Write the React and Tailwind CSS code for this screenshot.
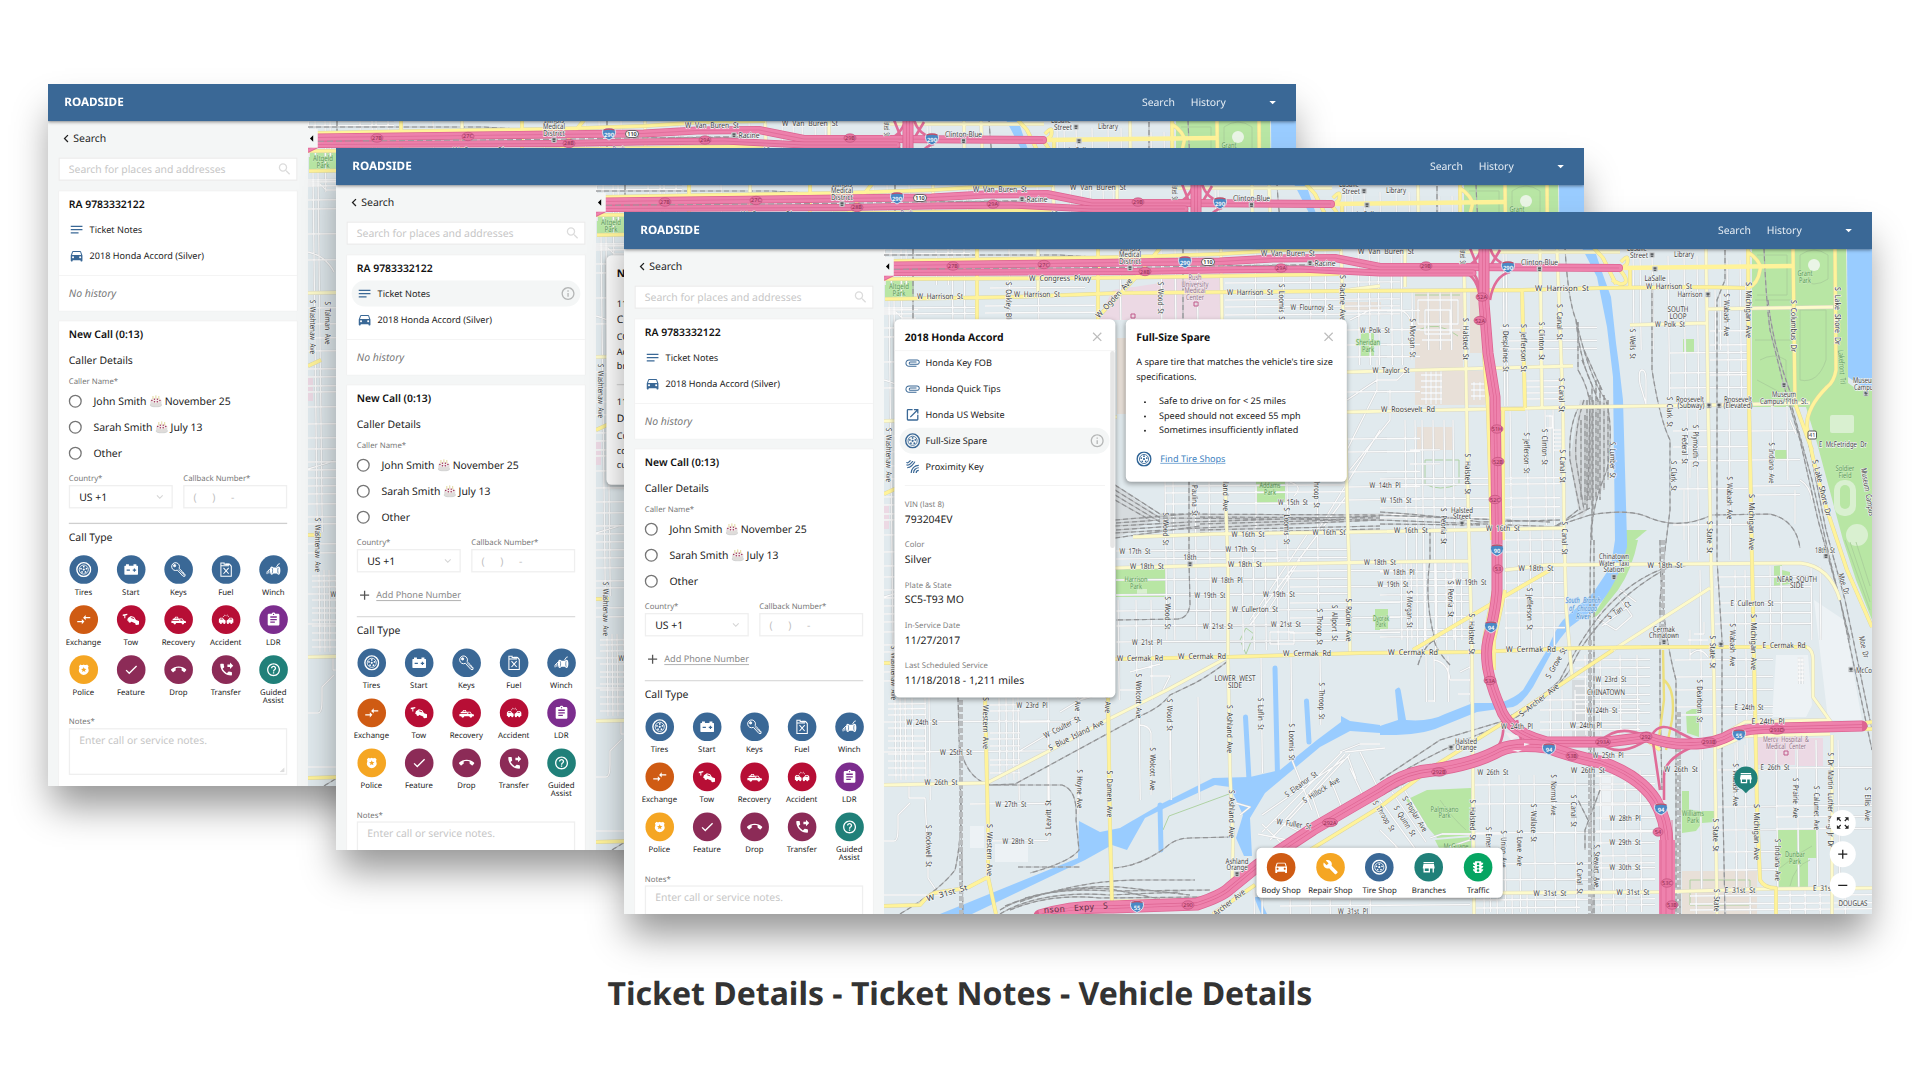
import React from "react";
import {
  MdNotes, MdDirectionsCar, MdSearch, MdAttachFile, MdOpenInNew, MdBuild, MdStore, MdTraffic, MdAssignment,
  MdCheck, MdCallEnd, MdPhoneForwarded, MdHelpOutline, MdInfoOutline, MdClose, MdAdd, MdRemove, MdZoomOutMap,
  MdArrowDropDown, MdArrowLeft, MdExpandMore, MdChevronLeft, MdCompareArrows,
} from "react-icons/md";

/* ---------- icons ---------- */

const TireIcon = ({ className }) => (
  <svg viewBox="0 0 24 24" className={className} fill="none" stroke="currentColor">
    <circle cx="12" cy="12" r="10.6" strokeWidth="2.2" />
    <circle cx="12" cy="12" r="7" strokeWidth="1.3" />
    <g fill="currentColor" stroke="none">
      <circle cx="12" cy="12" r="1.7" />
      <circle cx="12" cy="7.6" r="1.35" />
      <circle cx="16.2" cy="10.6" r="1.35" />
      <circle cx="14.6" cy="15.6" r="1.35" />
      <circle cx="9.4" cy="15.6" r="1.35" />
      <circle cx="7.8" cy="10.6" r="1.35" />
    </g>
  </svg>
);
const BatteryIcon = ({ className }) => (
  <svg viewBox="0 0 24 24" className={className} fill="currentColor">
    <path fillRule="evenodd" d="M4 4h4.5v2h7V4H20v2h1.5a1 1 0 0 1 1 1v12a1 1 0 0 1-1 1h-19a1 1 0 0 1-1-1V7a1 1 0 0 1 1-1H4zM5 12v1.8h5V12zm11.1-1.6V12h-1.7v1.8h1.7v1.7h1.8v-1.7h1.7V12h-1.7v-1.6z" />
  </svg>
);
const KeyIcon = ({ className }) => (
  <svg viewBox="0 0 24 24" className={className} fill="none" stroke="currentColor" strokeWidth="1.5" strokeLinejoin="round">
    <path d="M12.6 10.2a6 6 0 1 0-2.6 2.6l8.6 9.4h3.2v-3l-2-.4-.3-2.2-2-.3-.4-2z" />
    <circle cx="5.8" cy="6" r="1.7" fill="currentColor" />
    <path d="M12 12l8 8.3" strokeWidth="1" />
  </svg>
);
const FuelIcon = ({ className }) => (
  <svg viewBox="0 0 24 24" className={className} fill="none" stroke="currentColor" strokeWidth="1.6">
    <path d="M4 6V1.8h5V4h8.5L20 7v15.2H4z" />
    <path d="M4 6h12.5M8 9.5l8 9M16 9.5l-8 9" />
    <path d="M11 4h6" strokeWidth="2.4" />
  </svg>
);
const WinchIcon = ({ className }) => (
  <svg viewBox="0 0 24 24" className={className} fill="currentColor">
    <path d="M9.5 7.5c1.3 0 1.7 1.5 2.8 1.5h4.4c1.1 0 1.500-1.500 2.800-1.500 2.200 0 3 2.500 3 6s-.8 6.500-3 6.500c-1.300 0-1.700-1.800-2.800-1.800h-4.400c-1.100 0-1.500 1.800-2.800 1.800-2.200 0-3-3-3-6.500s.8-6 3-6z" />
    <path d="M7 10.500L2 15.500v3.500M4.800 13v5M16.500 8l3-4.500 2-.5" stroke="currentColor" strokeWidth="1.500" fill="none" />
    <path d="M9.800 9.500c1 2 1 6 0 8.500M19.200 9.500c-1 2-1 6 0 8.500" stroke="#3a6896" strokeWidth="1.100" fill="none" />
  </svg>
);
const TowIcon = ({ className }) => (
  <svg viewBox="0 0 28 24" className={className} fill="currentColor">
    <path d="M1 4l7-1v2l-3 .7V10H3.400V6L1 6.400z" />
    <path d="M9 9.500l4.500-3 5 1.600 3 4.400 4.500 1.500v6l-4.300-1.500-9-4-5-1z" />
    <circle cx="12" cy="14.500" r="2.200" />
    <circle cx="22.500" cy="18.300" r="2.200" />
    <path d="M13 9.200l1.500-1 3 1 1.400 2.200z" fill="#b70e35" />
  </svg>
);
const RecoveryIcon = ({ className }) => (
  <svg viewBox="0 0 28 24" className={className} fill="currentColor">
    <path d="M1 14h14v-4h5.500l3 4 3.500.8V18H1z" />
    <path d="M3 12.800l.5-2.300 2.500-.5 2-3h4.500l2.500 5.800z" />
    <circle cx="7" cy="18.300" r="2.300" />
    <circle cx="21.500" cy="18.300" r="2.300" />
    <path d="M17 11.300h2.800l1.800 2.600H17zM7.800 10l1.200-1.700h2.500l.8 1.700z" fill="#b70e35" />
  </svg>
);
const AccidentIcon = ({ className }) => (
  <svg viewBox="0 0 30 24" className={className} fill="currentColor">
    <path d="M1 18v-6l2.500-3.500h5L11 12l3 1.500V18zM29 18v-6l-2.500-3.500h-5L19 12l-3 1.500V18z" />
    <circle cx="5" cy="18.600" r="2.100" />
    <circle cx="11.500" cy="18.600" r="2.100" />
    <circle cx="18.500" cy="18.600" r="2.100" />
    <circle cx="25" cy="18.600" r="2.100" />
    <path d="M9 6.500l2.500-1 1-2.500L15 5l2.500-2 1 2.500 2.500 1" stroke="currentColor" strokeWidth="1.300" fill="none" strokeDasharray="2.500 1" />
    <path d="M3.500 12l1-2h3.200l1.300 2zM26.500 12l-1-2h-3.200L21 12z" fill="#b70e35" />
  </svg>
);
const PoliceIcon = ({ className }) => (
  <svg viewBox="0 0 24 24" className={className} fill="currentColor">
    <path fillRule="evenodd" d="M6 2.500a5 5 0 0 0 6 0 5 5 0 0 0 6 0l3 3c-1.800 2.200-.6 4.300 0 6.500 1 5.500-4.500 8.500-9 10-4.500-1.500-10-4.500-9-10 .6-2.200 1.800-4.300 0-6.500zM12 7l-1.400 3.400-3.600.3 2.800 2.300-.9 3.500L12 14.600l3.100 1.900-.9-3.500 2.800-2.300-3.600-.3z" />
  </svg>
);
const ProximityIcon = ({ className }) => (
  <svg viewBox="0 0 24 24" className={className} fill="none" stroke="currentColor" strokeWidth="1.800">
    <path d="M2.500 5Q4 7 6.500 4.500T9 2.500M2.500 9Q5.500 10.500 9 7T12.500 3M3.500 13.500Q8 13.500 11.500 9.500T15.500 4" />
    <path d="M21.500 17.500c-2.200 0-4 1.800-4 4M21.500 13.500c-4.500 0-8 3.500-8 8M21.500 9.800c-6.600 0-11.700 5.100-11.700 11.700" />
  </svg>
);
const Cake = () => (
  <svg viewBox="0 0 20 20" className="mx-1 h-5 w-5 shrink-0">
    <ellipse cx="10" cy="16" rx="9.500" ry="3.500" fill="#d2d3d3" />
    <path d="M1.500 9v6c0 4 17 4 17 0V9z" fill="#dfdcda" />
    <ellipse cx="10" cy="8.800" rx="8.500" ry="4.200" fill="#f3eceb" />
    <path d="M5.500 7V2M10 6V1M14.500 7V2" stroke="#ddd08c" strokeWidth="1.300" />
    <g fill="#9c2f58">
      <circle cx="3.800" cy="8.800" r="1.200" />
      <circle cx="7.800" cy="10.800" r="1.200" />
      <circle cx="12.200" cy="10.800" r="1.200" />
      <circle cx="16.200" cy="8.800" r="1.200" />
      <circle cx="7.800" cy="7" r="1" />
      <circle cx="12.300" cy="7" r="1" />
    </g>
  </svg>
);

/* ---------- map ---------- */

const vLines = (xs, y0, y1) => xs.map((x) => `M${x} ${y0}L${x + (y1 - y0) * 0.012} ${y1}`).join("");
const hLines = (ys, x0, x1) => ys.map((y) => `M${x0} ${y}L${x1} ${y - (x1 - x0) * 0.007}`).join("");

const minor = [
  vLines([884.5, 891, 906, 936, 948], 249, 285), vLines([901, 952, 964, 1009, 1038], 249, 320),
  hLines([249, 254], 884, 970), hLines([308, 314], 884, 977), hLines([306, 313], 985, 1095), hLines([288], 990, 1085),
  vLines([1120, 1161, 1175, 1197, 1255, 1283, 1310, 1325], 249, 320), hLines([283, 300, 307, 315], 1225, 1400),
  vLines([889, 894], 300, 660), hLines([310, 328, 337, 362, 388, 436, 452, 466, 479, 497, 505, 514, 520, 535, 552, 566, 577, 590, 598, 606, 614, 622, 632, 645, 652, 672, 681], 884, 918),
  "M884 312h12l6 6h14M884 380q18 4 26 20M884 597q14-4 26-8",
  vLines([1165, 1173, 1195, 1209, 1287, 1317], 480, 640), vLines([1118, 1136, 1151], 600, 700), vLines([1242, 1253, 1265, 1277], 540, 650),
  hLines([486, 493, 504], 1165, 1347), hLines([551, 559, 580, 595, 611, 626, 642], 1116, 1350), hLines([571, 587, 603, 618, 633], 1290, 1400),
  "M1347 495L1250 625M1310 530l-60 90M1380 430L1318 530M1300 560l-35 55M1256 485v50M1290 482q14 4 4 14M1270 632h24v12h-24z",
  vLines([1358, 1369, 1378, 1391, 1401], 249, 365), hLines([270, 311, 330, 345, 357, 392, 439, 452, 472, 487, 500, 515], 1347, 1420),
  "M1350 320l20-10h30q12 4 12 20v30M1347 400l30-20h20l8-8M1350 470l40-50v-30M1347 450l30-60v-30",
  vLines([1405, 1415, 1422, 1433, 1444, 1453], 420, 650), hLines([479, 485, 499, 508, 518], 1380, 1560), hLines([450, 464], 1410, 1440),
  "M1426 370v34M1431 370v34M1436 370v34M1441 370v34M1421 375h21M1421 381h21M1421 387h21M1421 393h21M1421 399h21M1471 384h14M1471 390h14M1471 396h14M1474 382v18M1480 382v18",
  vLines([1412, 1428, 1440, 1451], 290, 350), "M1418 300h40v24h-40zM1420 330h40M1422 340h30M1425 310h25v24h-25z",
  vLines([1503, 1506], 250, 406), vLines([1510, 1527, 1545, 1553], 408, 525), hLines([328, 341, 349], 1500, 1597), hLines([381, 387, 393, 399], 1525, 1563),
  "M1550 415v38M1553 430h10M1553 434h10M1553 438h10M1553 442h10M1553 446h10M1553 450h10M1546 416h6v12h-6",
  vLines([1633, 1652, 1640], 255, 350), vLines([1668, 1684, 1697], 256, 400), vLines([1727, 1740], 260, 403), vLines([1715, 1720], 290, 350),
  hLines([353, 373, 388], 1670, 1748), hLines([331, 345, 360, 375, 287], 1710, 1748), "M1642 370q4 0 4 10v26M1642 370q-4 0-2 14l6 20",
  vLines([1687, 1697, 1729], 406, 560), vLines([1772, 1787], 406, 480), hLines([431, 447, 461, 489, 525], 1673, 1748), hLines([431, 460, 486, 495], 1750, 1800),
  "M1690 462v16M1684 490v50M1800 480q10 6 12 20M1790 420l6 14M1795 490v34",
  vLines([1401, 1411, 1425, 1436, 1453, 1461], 560, 640), hLines([562, 572, 580, 586, 595, 602, 617, 630, 637], 1380, 1470),
  vLines([1505, 1518, 1530, 1542, 1553], 528, 650), hLines([540, 552, 583, 598, 613, 628], 1505, 1565),
  vLines([1426, 1434, 1448, 1470], 656, 702), "M1428 701h6M1450 680h22M1458 694h14M1434 660q14 2 16 20M1460 672l12-6",
  vLines([1585, 1600, 1620, 1637], 655, 735), hLines([660, 668, 677, 686, 695, 704, 713, 725, 755], 1575, 1650), vLines([1550, 1562, 1575], 690, 740), hLines([700, 710, 722, 730], 1540, 1640),
  "M1596 618l22-22 14 20-16 14z M1602 626l24-18M1620 590l16 12",
  vLines([1735, 1700, 1745], 570, 760), vLines([1770, 1781, 1811, 1820], 566, 640), hLines([577, 587, 603, 613, 624], 1715, 1811), hLines([660, 677, 690, 707, 715], 1675, 1773),
  "M1690 655q10-10 18 2M1690 630v30M1704 622v12h-10M1688 640h20",
  vLines([1799, 1802], 657, 684), "M1797 660h8M1797 664h8M1797 668h8M1797 672h8M1797 676h8M1797 680h8",
  vLines([1700, 1735, 1745], 745, 890), vLines([1776, 1797, 1816, 1838], 740, 888), hLines([770, 807, 830, 852, 870], 1718, 1776), hLines([768, 806, 817, 829], 1776, 1872),
  vLines([1489, 1504, 1519, 1534, 1554, 1575, 1590], 775, 912), hLines([785, 804, 833, 864, 880, 900], 1475, 1655),
  vLines([1600, 1612, 1625, 1640], 770, 912), hLines([776, 790, 805, 818, 831, 843, 856, 868, 880, 905], 1596, 1655),
  vLines([1484, 1497, 1512, 1527], 892, 914), hLines([900, 908], 1475, 1580), hLines([896, 904, 910], 1690, 1872), vLines([1696, 1725, 1750, 1790, 1805, 1820, 1845], 890, 914),
  "M1380 800l36 50M1392 792l34 50M1402 786l24 40M1380 830l30 30M1395 846l40 46M1410 860l60-20M1430 838l12-4h60",
  vLines([929, 1048, 1078, 1139, 1170, 1198, 1018], 697, 800), vLines([895, 900, 905, 912, 925], 698, 780),
  hLines([704, 709, 715, 722, 728, 736, 741, 748, 754, 761, 768, 775], 888, 926), hLines([722, 752], 884, 1050), hLines([705, 711, 733, 739, 746, 760, 765, 773], 990, 1020),
  vLines([999, 1006, 1013], 698, 780), hLines([804], 970, 1050), hLines([841], 988, 1048), hLines([722], 1020, 1078),
  "M909 786v12h16l3 60v20l8 12M884 841h10q4 0 4-12v-14l12-12M884 895h60M1048 740v100M1078 780v34M1018 752l60-36M1078 800v12M1139 725q10 0 12 8v62M1170 720v40",
  "M1060 712l50-30M1070 690l30-4M1120 690h20M1130 672l30-8M1150 676h20l-8 16M1080 700l26-8",
  vLines([1261], 657, 773), vLines([1291], 657, 760), vLines([1320], 655, 725),
  "M1262 832l80-80M1270 840l80-86M1285 820l60-66M1345 752l40-4M1262 815l26-18 60-40 8 22M1310 790l10 30M1330 778l12 30M1350 768l14 30M1360 752l20 40M1292 760l20 50M1262 824l20 20M1258 834l30 6",
  "M1240 815l10-8-14-4M1275 820l30 14M1340 752l20-8h20",
  vLines([1254, 1262, 1290, 1310, 1330, 1350, 1370], 890, 914), hLines([899, 906], 1280, 1470), hLines([893], 1280, 1475),
].join("");

const paleYellow = [
  "M884 421L1117 417M1347 412L1490 409L1580 407L1713 405L1810 403",
  "M1347 372L1573 366M1133 537L1213 534L1360 532L1563 528M1113 568L1227 565L1380 562L1470 561M1505 570L1547 565L1800 563Q1830 566 1840 600",
  "M884 785L987 783L1047 752L1107 720L1167 690L1228 657",
  "M1221 248L1222 320L1225 480L1228 567L1228 657L1230 773L1233 840L1232 887",
  "M1341 248L1343 313L1347 497L1349 563L1350 655",
  "M1464 262L1466 370L1468 500L1472 653L1473 787L1474 914",
  "M1405 249V287M1038 249V292M1540 248L1542 407M1557 248L1563 407L1564 523L1566 607L1572 677",
  "M1706 248L1708 403L1711 560L1714 680L1717 914",
  "M1708 309L1833 307M1630 325L1707 323M1460 252H1620M1380 286L1340 291",
  "M1474 893L1660 892L1760 889L1872 888M1613 650L1710 588M1807 647Q1813 650 1813 660V697L1831 722M1832 735V914",
  "M1717 748L1745 736L1830 734M1717 738L1745 722L1830 720M1232 887L1210 900L1113 901",
].join("");

const yellow = [
  "M893 261L1000 259L1130 257L1220 254L1280 250L1341 249",
  "M884 279L1093 278L1223 276L1340 274M885 299L1013 297L1120 293L1340 291L1522 290L1600 288L1707 287L1745 288",
  "M977 248V320L985 697L988 827L988 877L996 914M1098 248V320L1108 697L1110 827L1112 905",
  "M1160 248L1140 273L1097 318M884 494L897 488M884 663H897M884 906L920 905Q930 892 940 892L967 888L988 877",
  "M1113 659L1228 657L1360 653L1472 652L1580 648L1660 647L1807 647",
  "M1522 289L1525 408M1490 409H1525M1484 353L1488 409L1492 540M1503 409L1503 540",
  "M1748 248L1749 403L1752 560L1755 707L1757 807L1760 880Q1764 888 1776 888V914",
  "M1793 248L1795 403L1812 450M1835 248L1836 370Q1834 382 1827 387Q1806 408 1807 427Q1812 460 1827 510L1847 570L1872 627",
  "M1380 807L1433 767L1503 723L1572 677L1613 650M1380 807L1310 850M1255 885L1213 914M1413 650L1493 603L1550 570",
  "M1594 248L1603 258L1616 284M1621 262Q1630 252 1627 264L1620 270Q1632 284 1620 284L1612 280M1630 270V287",
  "M1748 252Q1762 262 1760 270Q1758 284 1748 288M1865 723L1872 722M1850 729H1872",
  "M1494 590L1484 640V670M1505 590L1494 640V670M1610 742L1640 735L1660 750",
].join("");

const highways = [
  ["M894 265.500L1163 262L1220 261.500L1273 258.500L1335 258L1365 264L1380 267L1463 267L1619 268", 8],
  ["M884 277L893 272.500L1133 271.500L1213 270L1300 269L1380 273L1473 273", 7],
];
const bigHighways = [
  "M1484 248L1484 303L1488 353L1495 397L1497 540L1497 590Q1496 608 1488 640Q1482 665 1500 707Q1508 732 1547 742L1607 742L1647 737Q1670 745 1690 744Q1716 744 1732 734Q1745 728 1780 728L1862 726",
  "M1040 916Q1070 906 1113 907L1197 904Q1222 896 1230 888L1257 866L1313 829L1380 790Q1405 772 1433 770Q1475 764 1500 750Q1515 743 1547 747Q1570 756 1600 762Q1640 776 1655 800Q1668 822 1667 850L1667 914",
];
const ramps = [
  "M1463 267Q1475 266 1482 248M1473 273Q1480 280 1482 305M1490 248Q1494 262 1510 267M1510 272Q1494 276 1490 300M1463 272Q1478 276 1480 300M1470 248L1478 268M1500 250L1488 270",
  "M1500 707Q1510 740 1490 755M1517 720L1522 745M1600 742Q1618 722 1650 738M1600 742Q1618 760 1650 738M1652 735Q1660 720 1680 733L1700 743M1653 742L1660 790M1664 800V776Q1664 760 1690 748",
].join("");

const rails = [
  "M1115 485L1160 514L1380 515L1550 522M1115 490L1160 518L1380 520L1560 527M1115 495L1160 522M1115 520L1200 513M1115 526L1190 522L1380 516M1115 533L1200 528L1380 520M1115 538L1200 526M1115 500L1150 520M1200 524L1340 520M1200 530L1380 526",
  "M1200 517L1380 518M1200 533L1380 529M1116 523L1160 520M1116 530L1190 525M1380 512Q1440 516 1480 522L1560 520M1380 524L1480 525",
  "M884 255H1060L1240 266L1330 265M913 249V320M1183 249V320",
  "M1189 480V560L1190 605Q1188 618 1178 619L1116 620M1228 661Q1210 675 1195 683L1170 695Q1160 708 1140 716L1015 784L990 785Q964 778 959 740",
  "M958 697L960 770L963 914M988 785H1062Q1078 790 1076 820L1079 850Q1070 862 1030 873M1018 867H1080M1114 868Q1140 866 1165 848Q1175 838 1190 838L1230 837",
  "M1000 914Q1040 890 1110 895L1180 892M1000 910Q1040 886 1110 891L1210 890M1005 906Q1060 884 1120 887L1190 895M1020 902Q1080 880 1140 880L1195 880M900 914Q940 890 955 870Q962 840 961 790",
  "M1010 910Q1050 893 1100 898L1200 897M1025 898Q1070 886 1110 889L1160 899",
  "M1565 248Q1568 300 1576 320Q1580 360 1592 385V520Q1588 540 1592 914M1576 320Q1590 380 1606 400Q1614 430 1607 470Q1590 510 1592 540M1594 540V914",
  "M1578 322V370Q1590 390 1590 410V500M1580 405Q1568 425 1570 460Q1576 490 1580 510M1584 400Q1574 430 1576 460L1584 510M1590 395L1588 500M1596 380V500M1600 385V500M1604 395V490M1608 400V480M1578 510L1560 524M1590 508L1555 526M1590 515L1550 528",
  "M1582 360L1598 400V490M1584 350L1602 390M1581 420V500M1585 415V505M1593 400V510M1587 400V510",
  "M1652 285V370Q1660 420 1670 440V510L1665 550L1660 600V700L1662 790M1660 540Q1660 620 1676 680V914M1680 760V914",
  "M1725 250V280L1717 300V560L1722 640V760L1725 914M1590 515Q1630 508 1650 518Q1680 530 1712 515L1770 514Q1796 520 1800 548",
  "M1764 248Q1766 300 1770 330L1784 386L1800 440L1818 520L1840 600L1872 750M1768 300Q1772 340 1788 386L1808 440L1826 530L1845 600L1872 730M1790 400L1812 480L1830 560L1850 640",
  "M1380 796L1420 775M1300 840L1380 796M1380 780Q1410 760 1440 740L1500 722Q1540 700 1560 680Q1580 640 1600 615Q1630 580 1665 568L1690 565M1380 786Q1430 752 1500 726Q1548 702 1570 670Q1580 644 1610 612Q1640 580 1680 562M1240 880L1310 832",
  "M1418 665Q1424 645 1435 640Q1424 600 1430 560V528M1450 665Q1436 650 1434 640M1600 790L1585 830V850M1588 820L1578 800",
].join("");

/* [text, centre x, centre y, length, rotation] */
const labels = [
  ["W Van Buren St", 1288, 253, 54], ["W Van Buren St", 1386, 251, 56], ["W Congress Pkwy", 1060, 278, 62], ["W Harrison St", 940, 296, 46], ["W Harrison St", 1037, 294.5, 46],
  ["W Harrison St", 1250, 292, 46], ["W Flournoy St", 1312, 307, 43], ["Racine", 1325, 263, 21], ["S Oakley Blvd", 1009, 304, 44, 90], ["W Ogden Ave", 1114, 298, 50, -48],
  ["S Wood St", 1161, 298, 32, 90], ["S Loomis St", 1282, 303, 38, 90], ["S Racine Ave", 1343, 298, 46, 90], ["W Polk St", 1375, 330, 30], ["S Washtenaw Ave", 889, 455, 54, 90],
  ["S Talman Ave", 904, 451, 43, 90], ["S Washtenaw Ave", 894, 673, 54, 90], ["W 14th Pl", 1385, 485, 31], ["W 15th St", 1293, 502, 30], ["W 15th St", 1396, 500, 31],
  ["W 16th St", 1248, 534, 33], ["W 16th St", 1329, 532, 33], ["S Wood St", 1166, 529, 33, 90], ["S Paulina St", 1195, 497, 38, 90], ["S Ashland Ave", 1226, 487, 48, 90],
  ["S Loomis St", 1287, 526, 37, 90], ["S Throop St", 1317, 490, 36, 90], ["W 17th St", 1135, 551, 31], ["W 17th St", 1241, 549, 31], ["18th", 1190, 557, 13], ["W 18th St", 1147, 566, 34],
  ["W 18th St", 1245, 564, 34], ["W 18th Pl", 1227, 580, 31], ["W 19th St", 1210, 595, 31], ["W 19th St", 1279, 594, 32], ["W Cullerton St", 1255, 609, 46], ["W 21st St", 1218, 626, 30],
  ["W 21st St", 1286, 624, 30], ["W 21st Pl", 1147, 642, 30], ["W Cermak Rd", 1140, 658, 46], ["W Cermak Rd", 1202, 656, 48], ["W Cermak Rd", 1307, 653, 48], ["S Wood St", 1168, 613, 33, 90],
  ["S Throop St", 1320, 627, 36, 90], ["S Allport St", 1335, 623, 36, 90], ["S Racine Ave", 1349, 620, 43, 90], ["W 24th St", 922, 722, 31], ["W 23rd Pl", 1032, 705, 31],
  ["S Western Ave", 986, 723, 52, 90], ["S Western Ave", 990, 850, 52, 90], ["S Hoyne Ave", 1078, 692, 39, 90], ["S Damen Ave", 1108, 690, 46, 90], ["W Coulter St", 1062, 727, 40, -27],
  ["S Blue Island Ave", 1076, 735, 60, -26], ["S Wolcott Ave", 1139, 696, 45, 90], ["S Wood St", 1170, 715, 32, 90], ["W 25th St", 956, 752, 32], ["W 26th St", 941, 782, 33],
  ["W 27th St", 1011, 804, 31], ["W 28th St", 1018, 841, 31], ["S Leavitt St", 1048, 818, 36, -90], ["S Hoyne Ave", 1080, 789, 39, 90], ["S Damen Ave", 1110, 794, 47, 90],
  ["S Wolcott Ave", 1153, 769, 43, 90], ["S Ashland Ave", 1230, 729, 48, 90], ["S Ashland Ave", 1232, 814, 48, 90], ["S Laflin St", 1261, 714, 32, 90], ["S Loomis St", 1292, 742, 37, 90],
  ["S Throop St", 1322, 701, 37, 90], ["S Eleanor St", 1301, 784, 38, -36], ["S Hillock Ave", 1321, 790, 42, -32], ["W Fuller St", 1294, 824, 35, 9], ["S Rockwell St", 929, 846, 42, 90],
  ["W 31st St", 947, 893, 42, -16], ["W 31st Pl", 1353, 911, 30], ["S Archer Ave", 1226, 905, 46, -38], ["Clinton-Blue", 1539.5, 262, 37], ["W Harrison St", 1562, 288, 54],
  ["LaSalle", 1637, 248, 20], ["Street", 1639, 255, 18], ["Library", 1684, 254, 20], ["LaSalle", 1655, 278, 21], ["W Harrison St", 1669, 286, 46], ["Harrison", 1690, 294.6, 25],
  ["SOUTH", 1678, 309, 21], ["LOOP", 1678, 316, 17], ["W Polk St", 1670, 324, 30], ["S Michigan Ave", 1749, 310, 56, 90], ["S Wabash Ave", 1727, 315, 43, 90], ["S Columbus Dr", 1794, 326, 52, 90],
  ["S Lake Shore Dr", 1838, 316, 58, 90], ["S Halsted St", 1466, 339, 42, 90], ["S Halsted St", 1463, 252, 24, 90], ["S Morgan St", 1413, 338, 39, 90], ["S Desplaines St", 1506, 348, 48, 90],
  ["S Jefferson St", 1524, 348, 48, 90], ["S Clinton St", 1542, 341, 38, 90], ["S Canal St", 1560, 322, 36, 90], ["S Canal St", 1562, 395, 34, 90], ["S Wells St", 1633, 344, 30, 90],
  ["W Taylor St", 1391, 370, 37], ["W Roosevelt Rd", 1408, 409, 54], ["Roosevelt", 1690, 399, 28], ["(Subway)", 1691, 405.5, 27], ["Roosevelt", 1738, 399, 28], ["(Elevated)", 1738, 405.5, 29],
  ["Museum", 1784, 394, 24], ["Campus/11th St.", 1784, 401, 48], ["Museum", 1865, 380, 24], ["Campus", 1865, 387, 22], ["S Clark St", 1670, 412, 30, 90], ["S Clark St", 1674, 476, 30, 90],
  ["S Federal St", 1685, 446, 36, 90], ["S Plymouth Ct", 1696, 446, 42, 90], ["S Wabash Ave", 1730, 498, 43, 90], ["S Indiana Ave", 1772, 463, 41, 90], ["S Lumber St", 1613, 460, 36, 90],
  ["S Canal St", 1563, 466, 33, 90], ["S Canal St", 1565, 538, 33, 90], ["S Clinton St", 1545, 447, 36, 90], ["S Jefferson St", 1527, 453, 41, 90], ["S Halsted St", 1468, 474, 41, 90],
  ["E McFetridge Dr", 1843, 444, 48], ["S Lake Shore Dr", 1822, 488, 58, 76], ["Museum Campus", 1868, 492, 48, 80], ["Halsted", 1462, 510, 22], ["Street", 1462, 516, 18],
  ["S Peoria St", 1444, 526, 36, 90], ["W 16th St", 1411, 530, 34], ["W 16th St", 1503, 528, 34], ["S Michigan Ave", 1752, 522, 56, 90], ["S State St", 1710, 537, 32, 90],
  ["W 18th St", 1380, 562, 32], ["W 18th St", 1536, 568, 35], ["W 18th St", 1665, 565, 35], ["W 18th Pl", 1399, 572, 31], ["W 19th St", 1393, 584, 31], ["W 19th St", 1471, 582, 31],
  ["S Morgan St", 1410, 609, 37, 90], ["S Peoria St", 1451, 599, 36, 90], ["S Jefferson St", 1530, 609, 42, 90], ["Chinatown", 1614, 556, 30], ["Water Taxi", 1614, 563, 30], ["Station", 1614, 569, 21],
  ["S Tan Ct", 1619, 610, 26, -33], ["NEAR SOUTH", 1797, 579, 40], ["SIDE", 1797, 585.5, 14], ["E Cullerton St", 1752, 603, 43], ["Cermak", 1664, 629, 22], ["Chinatown", 1664, 635.5, 30],
  ["W Cermak Rd", 1413, 652.5, 50], ["W Cermak Rd", 1531, 649, 50], ["E Cermak Rd", 1784, 645.5, 43], ["S Grove St", 1556, 663, 34, -60], ["S Halsted St", 1472, 634, 41, 90],
  ["S Michigan Ave", 1754, 642, 56, 90], ["S Wabash Ave", 1733, 645, 43, 90], ["S State St", 1713, 652, 33, 90], ["W 23rd St", 1611, 679, 31], ["CHINATOWN", 1606, 692, 38],
  ["W 24th St", 1602, 710, 31], ["W 24th Pl", 1517, 726, 32], ["W 24th Pl", 1586, 725, 32], ["S Archer Ave", 1539, 700, 48, -38], ["E 24th St", 1749, 707, 29], ["E 24th Pl", 1768, 721, 33],
  ["S Dearborn St", 1700, 701, 43, 90], ["Halsted", 1466, 741, 22], ["Orange", 1466, 747.5, 21], ["Ashland", 1237, 861, 23], ["Orange", 1237, 867.5, 21], ["W 25th Pl", 1608, 755, 31],
  ["W 26th St", 1493, 772, 31], ["W 26th St", 1588, 770, 34], ["W 26th St", 1681, 769, 34], ["E 26th St", 1775, 767, 29], ["S Poplar Ave", 1415, 814, 40, 58], ["S Quinn St", 1405, 821, 34, 58],
  ["S Throop St", 1384, 816, 34, 58], ["W 28th Pl", 1625, 818, 31], ["W 29th St", 1625, 842.5, 31], ["W 30th St", 1625, 867, 31], ["W 31st St", 1550, 893, 33], ["W 31st St", 1633, 892, 33],
  ["E 31st St", 1740, 890, 31], ["E 31st St", 1828, 888, 30], ["S Normal Ave", 1554, 795, 41, 90], ["S Canal St", 1574, 811, 32, 90], ["S Canal St", 1580, 878, 32, 90],
  ["S Wallace St", 1534, 823, 38, 90], ["S Lowe Ave", 1520, 848, 36, 90], ["S Union Ave", 1504, 849, 37, 90], ["S Emerald Ave", 1489, 848, 42, 90], ["S Stewart Ave", 1597, 866, 43, 90],
  ["S Halsted St", 1473, 820, 41, 90], ["S State St", 1716, 835, 33, 90], ["S State St", 1717, 905, 32, 90], ["S Wabash Ave", 1736, 785, 43, 90], ["S Michigan Ave", 1757, 832, 56, 90],
  ["S Prairie Ave", 1796, 798, 40, 90], ["S Calumet Ave", 1817, 808, 44, 90], ["S Indiana Ave", 1778, 860, 42, 90], ["S Dr Martin Luther King Jr Dr", 1831, 800, 95, 90],
  ["S Ellis Ave", 1868, 804, 34, 90], ["Moe Dr", 1844, 584, 22, 72], ["Moe Dr", 1864, 647, 22, 76], ["McCo", 1864, 670.5, 16], ["DOUGLAS", 1853, 903, 29], ["LOWER WEST", 1235, 678, 41], ["SIDE", 1235, 685, 14],
  ["18th St", 1825, 550, 20], ["Illinois", 1130, 248, 20], ["Medical", 1130, 254.5, 22], ["District", 1130, 261, 22],
];
const parkLabels = [
  ["Altgeld", 899, 286, 20], ["Park", 899, 293, 13], ["Sheridan", 1368, 342, 24], ["Park", 1368, 349, 12], ["Addams", 1270, 485.5, 21], ["Park", 1270, 492.5, 12],
  ["Harrison", 1136, 579.5, 23], ["Park", 1136, 586.5, 12], ["Grant", 1805, 273, 15], ["Park", 1805, 280, 12], ["Soldier", 1845, 468, 19], ["Field", 1845, 475, 13],
  ["Palmisano", 1444.6, 809, 28], ["Park", 1444.6, 815.5, 12], ["McGuane", 1456, 846.5, 25], ["Williams", 1693, 813.5, 22], ["Park", 1693, 820, 12], ["Dunbar", 1795, 854.5, 20],
  ["Park", 1795, 861.5, 12], ["Lakefront Trl", 1842, 367, 34, 86], ["Dvorak", 1381, 618, 16], ["Park", 1381, 624.5, 10],
];
const hospitalLabels = [
  ["Rush", 1195, 277, 13], ["University", 1195, 284, 27], ["Medical", 1195, 290.5, 21], ["Center", 1195, 297.5, 18], ["Mercy Hospital &", 1786, 739, 46], ["Medical Center", 1786, 746, 40],
];
const riverLabels = [["South Branch", 1583, 600.5, 35], ["of Chicago", 1583, 608.5, 28], ["River", 1583, 616.5, 14]];

const exits = [
  ["27B", 953, 266], ["27C", 1044, 264.5], ["28B", 1145, 271.5], ["29A", 1281, 268], ["29B", 1426, 266], ["52A", 1482, 297], ["52A", 1480, 320.5], ["51H", 1497, 429],
  ["52B", 1498, 461.5], ["52C", 1495, 499.5], ["53", 1498, 569], ["53A", 1490, 680.5], ["292B", 1439, 772], ["292A", 1330, 822.5], ["293A", 1603, 742], ["292", 1646, 736.5],
  ["293B", 1709, 742], ["293D", 1777, 730], ["53B", 1572, 756], ["54", 1658, 832], ["53C", 1667, 883], ["53B", 1672, 905], ["290", 1188, 905],
];
const shields = [["290", 1185, 262], ["290", 1508, 267], ["90", 1497, 550], ["94", 1491, 627], ["94", 1549, 749], ["55", 1739, 735], ["94", 1661, 809], ["55", 1137, 906.5]];
const stations = [[1130, 268], [1310, 263], [1539.5, 269], [1652, 255], [1655, 269], [1708, 294.5], [1709, 405.5], [1719, 405.5], [1784, 385], [1866, 393.5], [1462, 523.5], [1190, 564], [1614, 577], [1664, 642], [1721, 644.5], [1851, 669.5], [1451, 747.5], [1237, 874], [1826, 556]];

const Labels = ({ items, fill, halo = "#f4f7f8", italic }) => (
  <g fontSize="8" fill={fill} stroke={halo} strokeWidth="1.300" paintOrder="stroke" strokeLinejoin="round" textAnchor="middle" wordSpacing="2.500" fontStyle={italic ? "italic" : "normal"}>
    {items.map(([t, x, y, len, rot], i) => (
      <text key={i} x={x} y={y} dy="2.800" textLength={len} lengthAdjust="spacingAndGlyphs" transform={rot ? `rotate(${rot} ${x} ${y})` : undefined}>
        {t}
      </text>
    ))}
  </g>
);

const CityMap = () => (
  <svg viewBox="884 248.4 988 665.6" className="block h-full w-full" preserveAspectRatio="none">
    <rect x="884" y="248" width="988" height="666" fill="#e1eaee" />
    <path d="M1113 290L1160 283L1162 278H1220V320H1097zM1758 738h37v27h-37zM1796 738h27v28h-27zM884 505h5v24h-5z" fill="#ecd9e4" />
    <path d="M1415 291h48v78h-48zM1415 371h70v34h-70zM1417 427h36v23h-36zM1470 291h14v62h-14zM1682 871h75v43h-75zM1117 338h11v76h-11zM1345 302h36v8h-36z" fill="#e8e0d8" />
    <path d="M1776 655h32l4 50-6 12h-34zM1814 600l30 20 18 100h-34zM1600 775h14v45h-14zM995 844h33v18h-33zM970 826h14v22h-14z" fill="#edf2f5" />
    <path d="M1572 680h14v60h-14zM1115 485l45 32-45 22zM1160 514H1380V520L1200 532L1160 525zM1580 400L1606 402L1610 440L1602 490L1580 520L1570 460z" fill="#d6dbde" />
    <g fill="#b8e6a4">
      <path d="M1752 248H1846L1848 383L1858 390L1872 390V540H1843L1817 443L1806 407H1752z" />
      <path d="M885 281h29v17h-29zM1256 481h29v22h-29zM1116 568h50v29h-50zM1361 333h13v24h-13zM1683 339h11v13h-11zM1775 450h12v9h-12zM1375 609h13v21h-13zM1774 566l8-1v5l8 2v12l-16 2z" />
      <path d="M1626 540H1638Q1632 570 1618 590L1597 616L1592 618L1603 600L1618 574zM1686 712l6-3h7v28l-12-4zM1427 790L1471 788V835L1437 838L1430 830L1406 800z M1435 840L1471 837V850H1440zM1682 791h7v19l12 1h13v11l-12 1-6 8-14 2zM1777 830H1817V858H1808V887H1777zM1843 540H1872V620L1856 580z" />
      <path d="M1625 530h22l-12 10h-10z" />
    </g>
    <g fill="#d9f0d0">
      <rect x="1830" y="415" width="24" height="18" rx="2" />
      <rect x="1834" y="480" width="22" height="36" rx="10" />
      <rect x="1840" y="485" width="10" height="24" rx="5" fill="#b8e6a4" />
      <circle cx="1814" cy="265" r="6" fill="#eaf5e6" />
      <circle cx="1857" cy="535" r="11" />
      <rect x="1137" y="589" width="10" height="7" />
    </g>
    <path d="M1755 300h36M1755 340h36M1760 360q14-8 26 0v30M1800 310h26v50q-8 24-26 20zM1757 255h30v40h-30M1800 255q14-10 28 0v24q-14 10-28 0zM1757 380l30 16M1845 540l25 70M1850 542l20 60M1856 542l14 44M1418 330q20-10 40 6M1425 460h34v24q-20 8-34 0zM1780 868q16-14 32-22M1790 886q4-20 20-26M1440 800q14 20 26 30M1690 880h60v25h-60zM1415 295h45M1163 830l6-14 60-22M1240 640l6-12 8 6-8 20z" fill="none" stroke="#a9cf9b" strokeWidth="0.900" />
    <g fill="#99ccff">
      <path d="M1847 248H1872V388L1860 385L1848 377z" />
      <path d="M1582 248H1594L1602 272L1611 297L1616 343L1619 365L1623 400L1627 540L1627 547Q1618 584 1597 607L1570 627Q1558 640 1553 650L1533 687Q1522 704 1513 707L1477 712L1440 727Q1420 736 1380 735V726L1398 720L1395 690Q1400 684 1401 692L1406 720Q1430 722 1445 714L1473 703L1500 703Q1515 698 1523 690L1547 650Q1556 628 1563 620L1593 593L1611 566L1615 540L1613 377L1607 327L1597 277z" />
      <path d="M940 914L1078 858L1079 821L1100 832L1120 828L1163 803L1213 778L1250 777L1280 770L1317 740L1341 722L1341 716L1350 721L1380 725V733L1350 731L1320 747L1265 793L1250 818L1252 856L1244 856L1236 838L1243 815L1230 787L1215 785L1165 808L1145 818L1127 850L1112 845L1085 860L972 914z" />
      <path d="M1259 897L1267 914H1261L1254 897z" />
    </g>
    <path d="M1245.500 717L1249 780M1275 668L1277.500 775M1306.500 701L1309 742M1160 805L1161 850" stroke="#99ccff" strokeWidth="5" strokeLinecap="round" />
    <g fill="none" strokeLinejoin="round">
      <path d={minor} stroke="#cdd1d4" strokeWidth="2.200" />
      <path d={minor} stroke="#fbfbfb" strokeWidth="1.300" />
      <path d={rails} stroke="#b5b7b9" strokeWidth="1.100" />
      <path d={rails} stroke="#929496" strokeWidth="1.200" strokeDasharray="5 3" />
      <path d="M1590 640V914M1663 540V640M1679 712V914M961 700V914" stroke="#b9bcbe" strokeWidth="4" strokeDasharray="5 2" />
      <path d={paleYellow} stroke="#d9d7c4" strokeWidth="3.800" />
      <path d={paleYellow} stroke="#fdfacb" strokeWidth="2.800" />
      <path d="M1663 650L1664 700L1658 745M1664 680Q1676 690 1672 720L1666 750" stroke="#ecdf7c" strokeWidth="2.400" />
      <path d={yellow} stroke="#dcd6a0" strokeWidth="4" />
      <path d={yellow} stroke="#fff39a" strokeWidth="3.200" />
      <path d="M1620 268L1793 266" stroke="#fff39a" strokeWidth="4.500" />
      <path d={ramps} stroke="#e06c98" strokeWidth="2.600" />
      {highways.map(([d, w], i) => (
        <g key={i}>
          <path d={d} stroke="#dd6492" strokeWidth={w} strokeLinecap="round" />
          <path d={d} stroke="#ee82ad" strokeWidth={w - 1.6} strokeLinecap="round" />
          <path d={d} stroke="#e2709d" strokeWidth="1" />
        </g>
      ))}
      <path d="M894 269.300L1133 267.300L1240 265.500L1330 264.500" stroke="#a39aa0" strokeWidth="1.100" strokeDasharray="6 3" />
      {bigHighways.map((d, i) => (
        <g key={i}>
          <path d={d} stroke="#dd6492" strokeWidth={i ? 13 : 11} strokeLinecap="round" />
          <path d={d} stroke="#ee82ad" strokeWidth={i ? 11.4 : 9.4} />
          <path d={d} stroke="#dd6492" strokeWidth="3.400" />
          <path d={d} stroke="#ee82ad" strokeWidth="2.200" />
        </g>
      ))}
      <path d="M1667 840V914" stroke="#ee82ad" strokeWidth="16" />
      <path d="M1661 840V914M1666 840V914M1672 820V914" stroke="#dd6492" strokeWidth="0.800" />
      <path d="M1505 732l14 4-8 4zM1524 743l6 1-6 2zM1512 750l10 0-4 2z" fill="#f2eef2" />
    </g>
    {exits.map(([t, x, y], i) => (
      <g key={i}>
        <ellipse cx={x} cy={y} rx={t.length > 3 ? 7.5 : t.length > 2 ? 6 : 5} ry="4.200" fill="#e874a1" stroke="#bb4a76" strokeWidth="0.600" />
        <text x={x} y={y + 2} fontSize="5.500" textAnchor="middle" fill="#8e2c50">{t}</text>
      </g>
    ))}
    {shields.map(([t, x, y], i) => (
      <g key={i}>
        <path d={`M${x - 6} ${y - 4.5}q6 -2 12 0q2.500 7 -6 10.500q-8.500 -3.500 -6 -10.500z`} fill="#4a88c4" stroke="#e8eef4" strokeWidth="0.900" />
        <path d={`M${x - 5.5} ${y - 4}q5.500 -2 11 0`} stroke="#c0506a" strokeWidth="1.300" fill="none" />
        <text x={x} y={y + 3} fontSize="5.800" fontWeight="600" textAnchor="middle" fill="#fff">{t}</text>
      </g>
    ))}
    <rect x="1201.500" y="258.500" width="13" height="7" rx="3.500" fill="#fff" stroke="#555" strokeWidth="0.900" />
    <text x="1208" y="264.300" fontSize="5.500" fontWeight="600" textAnchor="middle" fill="#333">110</text>
    <rect x="1808" y="431" width="8.500" height="8" rx="1.500" fill="#fff" stroke="#444" strokeWidth="0.900" />
    <text x="1812.200" y="437.300" fontSize="5.500" textAnchor="middle" fill="#333">41</text>
    {stations.map(([x, y], i) => (
      <g key={i}>
        <rect x={x - 2.8} y={y - 2.8} width="5.600" height="5.600" rx="1" fill="#c9ccce" />
        <path d={`M${x - 1.5} ${y - 1.8}h3v2.400h-3zM${x - 1.8} ${y + 2}l1 -1h1.600l1 1z`} fill="#5b5f62" />
      </g>
    ))}
    <path d="M1131 314h4v4h-4zM1194 302h4v4h-4zM1784 751h4v4h-4z" fill="none" stroke="#c0588a" strokeWidth="1" />
    <Labels items={labels} fill="#3f3f3f" />
    <Labels items={parkLabels} fill="#5f9a5c" halo="#c8ebba" />
    <Labels items={hospitalLabels} fill="#8f7588" halo="#f3e6ee" />
    <Labels items={riverLabels} fill="#4f8fd0" halo="#cfe6fb" italic />
    <text x="1044" y="913" fontSize="8.500" textLength="64" fill="#5d3044" wordSpacing="6" transform="rotate(-4 1044 913)">nson Expy S</text>
  </svg>
);

/* ---------- sidebar ---------- */

const BLUE = "bg-[#3a6896]";
const RED = "bg-[#b70e35]";
const WINE = "bg-[#8c2b57]";
const callTypes = [
  ["Tires", BLUE, TireIcon, "h-6 w-6"],
  ["Start", BLUE, BatteryIcon, "h-6 w-6"],
  ["Keys", BLUE, KeyIcon, "h-6 w-6"],
  ["Fuel", BLUE, FuelIcon, "h-6 w-6"],
  ["Winch", BLUE, WinchIcon, "h-6 w-6"],
  ["Exchange", "bg-[#cf5b13]", MdCompareArrows, "h-6 w-6"],
  ["Tow", RED, TowIcon, "h-6 w-7"],
  ["Recovery", RED, RecoveryIcon, "h-6 w-6"],
  ["Accident", RED, AccidentIcon, "h-6 w-6"],
  ["LDR", "bg-[#7c2d8e]", MdAssignment, "h-6 w-6"],
  ["Police", "bg-[#f5a623]", PoliceIcon, "h-5 w-5"],
  ["Feature", WINE, MdCheck, "h-6 w-6"],
  ["Drop", WINE, MdCallEnd, "h-6 w-6"],
  ["Transfer", WINE, MdPhoneForwarded, "h-6 w-6"],
  ["Guided Assist", "bg-[#208079]", MdHelpOutline, "h-6 w-6"],
];

const RoundItem = ({ label, color, Icon, size, className = "" }) => (
  <div className={"flex flex-col items-center " + className}>
    <span className={"flex h-11 w-11 items-center justify-center rounded-full text-white " + color}>
      <Icon className={size} />
    </span>
    <span className="mt-[7px] text-center text-xs leading-3 text-[#222]">{label}</span>
  </div>
);

const ListRow = ({ icon, label, active }) => (
  <div className={"mx-2 flex h-10 items-center rounded-full pr-[7px] pl-2 " + (active ? "bg-[#f4f6f6]" : "")}>
    <span className="flex w-6 items-center justify-center text-[#3a6896]">{icon}</span>
    <span className="ml-2 flex-1 pt-px text-sm text-[#222]">{label}</span>
    {active && <MdInfoOutline className="h-6 w-6 text-[#b4b6b6]" />}
  </div>
);

const Radio = ({ children }) => (
  <div className="flex h-10 items-center text-base text-[#222]">
    <span className="mr-[18px] h-5 w-5 shrink-0 rounded-full border-2 border-[#757575]" />
    {children}
  </div>
);

const Sidebar = ({ notesActive, addPhone }) => (
  <aside className="h-full w-[400px] shrink-0 overflow-hidden bg-[#f4f6f6] px-4 pt-4">
    <div className="flex h-6 items-center text-base text-[#222]">
      <MdChevronLeft className="-mr-1 h-6 w-6" />
      <span className="ml-[3px]">Search</span>
    </div>
    <div className="mt-[17px] flex h-9 items-center justify-between border-2 border-[#ebecec] bg-white pr-1.5 pl-3.5 text-base text-[#c6c6c6]">
      Search for places and addresses
      <MdSearch className="h-6 w-6 text-[#dcdcdc]" />
    </div>
    <section className="mt-[15px] h-[186px] border border-[#ebecec] bg-white">
      <h2 className="h-[39px] px-[15px] pt-2 text-base font-semibold text-[#111]">RA 9783332122</h2>
      <div className="-mx-px">
        <ListRow icon={<MdNotes className="h-6 w-6" />} label="Ticket Notes" active={notesActive} />
        <ListRow icon={<MdDirectionsCar className="h-6 w-6" />} label="2018 Honda Accord (Silver)" />
      </div>
      <p className="mt-2.5 border-t border-[#efefef] px-[15px] pt-3.5 text-base text-[#777] italic">No history</p>
    </section>
    <section className="mt-3.5 h-[760px] border border-[#ebecec] bg-white px-[15px]">
      <h2 className="pt-2 text-base font-semibold text-[#111]">New Call (0:13)</h2>
      <h3 className="mt-4 text-base text-[#222]">Caller Details</h3>
      <p className="mt-3 text-xs text-[#777]">Caller Name*</p>
      <div className="mt-[3px]">
        <Radio>John Smith <Cake /> November 25</Radio>
        <Radio>Sarah Smith <Cake /> July 13</Radio>
        <Radio>Other</Radio>
      </div>
      <div className="mt-[11px] flex gap-4">
        <div className="flex-1">
          <p className="text-xs text-[#777]">Country*</p>
          <div className="mt-0.5 flex h-9 items-center justify-between border-2 border-[#efefef] pr-2 pl-3.5 text-base text-[#222]">
            US +1
            <MdExpandMore className="h-5 w-5 text-[#d5d5d5]" />
          </div>
        </div>
        <div className="flex-1">
          <p className="text-xs text-[#777]">Callback Number*</p>
          <div className="mt-0.5 flex h-9 items-center gap-6 border-2 border-[#efefef] pl-3.5 text-base text-[#c0c0c0]">
            <span>(</span>
            <span>)</span>
            <span>-</span>
          </div>
        </div>
      </div>
      {addPhone ? (
        <div className="mt-[23px] flex h-6 items-center text-sm text-[#888]">
          <MdAdd className="h-6 w-6 text-[#555]" />
          <span className="ml-1.5 underline underline-offset-4">Add Phone Number</span>
        </div>
      ) : null}
      <div className={addPhone ? "mt-5 border-t-2 border-[#dcdcdc]" : "mt-[22px] border-t-2 border-[#cfcfcf]"} />
      <h3 className="mt-2 text-base text-[#222]">Call Type</h3>
      <div className="mt-4 -mr-[15px] -ml-3.5 grid grid-cols-5">
        {callTypes.map(([label, color, Icon, size]) => (
          <RoundItem key={label} label={label} color={color} Icon={Icon} size={size} className="h-[77px] px-2" />
        ))}
      </div>
      <p className="mt-[17px] text-xs text-[#777]">Notes*</p>
      <div className="mt-0.5 flex h-[72px] items-end justify-between border-2 border-[#efefef] pl-3.5 text-base text-[#c6c6c6]">
        <span className="self-start pt-1">Enter call or service notes.</span>
        <svg viewBox="0 0 8 8" className="m-0.5 h-2 w-2"><path d="M8 0v8H0z" fill="#ddd" /></svg>
      </div>
    </section>
  </aside>
);

/* ---------- floating panels ---------- */

const PanelTitle = ({ children }) => (
  <div className="flex h-12 items-center justify-between pt-1.5 pr-4 pl-4">
    <h2 className="text-base font-bold text-[#111]">{children}</h2>
    <MdClose className="h-6 w-6 text-[#bdbdbd]" />
  </div>
);

const vehicleRows = [
  ["Honda Key FOB", <MdAttachFile className="h-6 w-6 rotate-90" />],
  ["Honda Quick Tips", <MdAttachFile className="h-6 w-6 rotate-90" />],
  ["Honda US Website", <MdOpenInNew className="h-6 w-6" />],
  ["Full-Size Spare", <TireIcon className="h-6 w-6" />, true],
  ["Proximity Key", <ProximityIcon className="h-6 w-6" />],
];
const vehicleFacts = [
  ["VIN (last 8)", "793204EV"],
  ["Color", "Silver"],
  ["Plate & State", "SC5-T93 MO"],
  ["In-Service Date", "11/27/2017"],
  ["Last Scheduled Service", "11/18/2018 - 1,211 miles"],
];

const VehiclePanels = () => (
  <div className="absolute top-[109px] left-4 flex items-start gap-4">
    <section className="relative h-[582px] w-[340px] rounded-lg bg-white shadow-[0_3px_8px_rgba(0,0,0,0.35)]">
      <div className="border-b border-[#eee]"><PanelTitle>2018 Honda Accord</PanelTitle></div>
      <div className="-mt-[2px] mr-px">
        {vehicleRows.map(([label, icon, active]) => (
          <ListRow key={label} icon={icon} label={label} active={active} />
        ))}
      </div>
      <dl className="mx-4 mt-2 border-t border-[#eee] pt-[21px]">
        {vehicleFacts.map(([k, v]) => (
          <div key={k} className="h-[62px]">
            <dt className="text-xs leading-4 text-[#808080]">{k}</dt>
            <dd className="mt-0.5 text-base leading-6 text-[#222]">{v}</dd>
          </div>
        ))}
      </dl>
      <span className="absolute top-[49px] right-px h-[303px] w-[7px] rounded-full bg-[#e6e6e6]" />
    </section>
    <section className="h-[250px] w-[340px] rounded-lg bg-white shadow-[0_3px_8px_rgba(0,0,0,0.35)]">
      <PanelTitle>Full-Size Spare</PanelTitle>
      <div className="px-4 pt-2 text-sm leading-[22px] text-[#222]">
        <p className="whitespace-nowrap">A spare tire that matches the vehicle's tire size<br />specifications.</p>
        <ul className="mt-4">
          {["Safe to drive on for < 25 miles", "Speed should not exceed 55 mph", "Sometimes insufficiently inflated"].map((t) => (
            <li key={t} className="flex items-center">
              <span className="mr-5 ml-3 h-[3px] w-[3px] rounded-full bg-[#222]" />
              {t}
            </li>
          ))}
        </ul>
        <div className="mt-[21px] flex items-center">
          <TireIcon className="h-6 w-6 text-[#2f6496]" />
          <span className="ml-[13px] text-[#3b7fc0] underline underline-offset-2">Find Tire Shops</span>
        </div>
      </div>
    </section>
  </div>
);

const NotesPanel = () => (
  <section className="absolute top-[109px] left-4 h-[353px] w-[340px] rounded-lg bg-white shadow-[0_3px_8px_rgba(0,0,0,0.35)]">
    <PanelTitle>Notes</PanelTitle>
    <div className="px-4 pt-4 text-[#222]">
      <p className="text-sm leading-[22px]">11</p>
      <p className="text-base">C</p>
      <p className="mt-1.5 text-sm leading-[22px]">CC<br />Ac<br />br</p>
      <div className="my-4 border-t-2 border-[#ddd]" />
      <p className="text-sm leading-[22px]">11</p>
      <p className="text-base">D</p>
      <p className="mt-1.5 text-sm leading-[22px]">Cu<br />co<br />cu</p>
    </div>
  </section>
);

const shops = [
  ["Body Shop", "bg-[#cf5b13]", MdDirectionsCar],
  ["Repair Shop", "bg-[#f5a623]", MdBuild],
  ["Tire Shop", BLUE, TireIcon],
  ["Branches", "bg-[#208079]", MdStore],
  ["Traffic", "bg-[#06a562]", MdTraffic],
];

const MapControls = () => (
  <>
    <div className="absolute top-[922px] left-[573px] flex h-[77px] w-[379px] rounded-lg bg-white pt-2 shadow-[0_2px_6px_rgba(0,0,0,0.35)]">
      {shops.map(([label, color, Icon]) => (
        <RoundItem key={label} label={label} color={color} Icon={Icon} size="h-6 w-6" className="w-[75.8px] whitespace-nowrap" />
      ))}
    </div>
    <div className="absolute top-[864px] left-[1455px] flex flex-col gap-2">
      {[MdZoomOutMap, MdAdd, MdRemove].map((Icon, i) => (
        <span key={i} className="flex h-10 w-10 items-center justify-center rounded-full bg-white text-[#222]">
          <Icon className="h-6 w-6" />
        </span>
      ))}
    </div>
    <div className="absolute top-[797px] left-[1308px] flex flex-col items-center">
      <span className="z-10 flex h-9 w-9 items-center justify-center rounded-full bg-[#208079] text-white">
        <MdStore className="h-6 w-6" />
      </span>
      <span className="-mt-[7px] h-2.5 w-2.5 rotate-45 bg-[#208079]" />
    </div>
  </>
);

/* ---------- window ---------- */

const AppWindow = ({ place, notesActive, addPhone, children }) => (
  <div className={"absolute h-[702px] w-[1248px] shadow-[0_24px_36px_-4px_rgba(0,0,0,0.42)] " + place}>
    <div className="h-full w-full overflow-hidden">
      <div className="flex h-[1080px] w-[1920px] origin-top-left scale-[0.65] flex-col bg-[#f4f6f6]">
        <header className="relative z-20 flex h-[57px] shrink-0 items-center bg-[#3a6896] pr-6 pb-px pl-[25px] text-white shadow-[0_2px_5px_rgba(0,0,0,0.45)]">
          <h1 className="flex-1 text-lg font-bold">ROADSIDE</h1>
          <nav className="flex items-center text-base text-[#e6edf4]">
            <span className="w-[75px]">Search</span>
            <span className="w-[114px]">History</span>
            <MdArrowDropDown className="h-6 w-6 text-white" />
          </nav>
        </header>
        <div className="-mt-px flex h-[1024px]">
          <Sidebar notesActive={notesActive} addPhone={addPhone} />
          <main className="relative h-full w-[1520px] overflow-hidden">
            <CityMap />
            <span className="absolute top-[13px] left-0 flex h-[29px] w-[15px] items-center justify-center bg-[#f4f6f6]">
              <MdArrowLeft className="-ml-1 h-6 w-6 shrink-0 text-black" />
            </span>
            {children}
          </main>
        </div>
      </div>
    </div>
  </div>
);

export default function App() {
  return (
    <div className="relative h-[1080px] w-[1920px] overflow-hidden bg-white font-['Noto_Sans',sans-serif] [text-rendering:geometricPrecision]">
      <AppWindow place="top-[84px] left-[48px]" />
      <AppWindow place="top-[148px] left-[336px]" notesActive addPhone>
        <NotesPanel />
      </AppWindow>
      <AppWindow place="top-[212px] left-[624px]" addPhone>
        <VehiclePanels />
        <MapControls />
      </AppWindow>
      <h1 className="flex h-full items-end justify-center pb-[63px] text-[32px] leading-[46px] font-bold text-[#333]">
        Ticket Details - Ticket Notes - Vehicle Details
      </h1>
    </div>
  );
}
